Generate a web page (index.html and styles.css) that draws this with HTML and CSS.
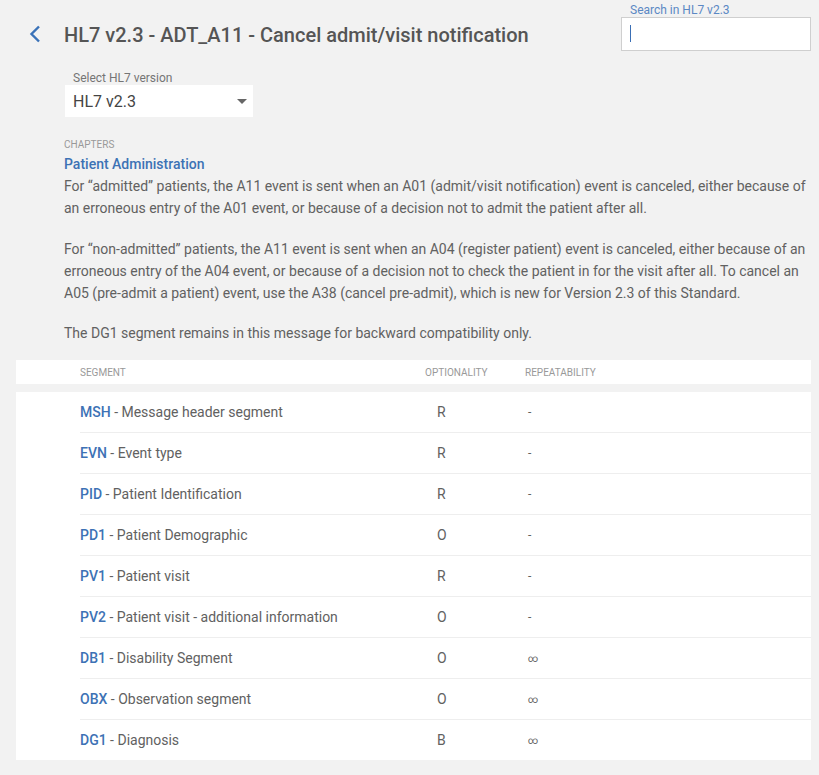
FILE: index.html
```html
<!DOCTYPE html>
<html lang="en">
<head>
<meta charset="utf-8">
<title>HL7 v2.3 - ADT_A11</title>
<link rel="stylesheet" href="styles.css">
</head>
<body>
<header class="header">
  <a class="back" href="#" aria-label="Back">
    <svg width="14" height="18" viewBox="0 0 14 18"><path d="M11 1.5 L3.5 9 L11 16.5" fill="none" stroke="#3a72b8" stroke-width="2.4"/></svg>
  </a>
  <h1 class="title">HL7 v2.3 - ADT_A11 - Cancel admit/visit notification</h1>
  <div class="search">
    <label class="search-label">Search in HL7 v2.3</label>
    <div class="search-input"><span class="caret"></span></div>
  </div>
</header>

<section class="version">
  <div class="version-label">Select HL7 version</div>
  <div class="select">
    <span>HL7 v2.3</span>
    <span class="arrow"></span>
  </div>
</section>

<section class="chapter">
  <div class="chapters-label">CHAPTERS</div>
  <div class="chapter-name">Patient Administration</div>
  <p>For “admitted” patients, the A11 event is sent when an A01 (admit/visit notification) event is canceled, either because of an erroneous entry of the A01 event, or because of a decision not to admit the patient after all.</p>
  <p>For “non-admitted” patients, the A11 event is sent when an A04 (register patient) event is canceled, either because of an erroneous entry of the A04 event, or because of a decision not to check the patient in for the visit after all. To cancel an A05 (pre-admit a patient) event, use the A38 (cancel pre-admit), which is new for Version 2.3 of this Standard.</p>
  <p>The DG1 segment remains in this message for backward compatibility only.</p>
</section>

<section class="table">
  <div class="thead">
    <div class="c-seg">SEGMENT</div>
    <div class="c-opt">OPTIONALITY</div>
    <div class="c-rep">REPEATABILITY</div>
  </div>
  <div class="tbody">
    <div class="row"><div class="c-seg"><b>MSH</b> - Message header segment</div><div class="c-opt v">R</div><div class="c-rep v">-</div></div>
    <div class="row"><div class="c-seg"><b>EVN</b> - Event type</div><div class="c-opt v">R</div><div class="c-rep v">-</div></div>
    <div class="row"><div class="c-seg"><b>PID</b> - Patient Identification</div><div class="c-opt v">R</div><div class="c-rep v">-</div></div>
    <div class="row"><div class="c-seg"><b>PD1</b> - Patient Demographic</div><div class="c-opt v">O</div><div class="c-rep v">-</div></div>
    <div class="row"><div class="c-seg"><b>PV1</b> - Patient visit</div><div class="c-opt v">R</div><div class="c-rep v">-</div></div>
    <div class="row"><div class="c-seg"><b>PV2</b> - Patient visit - additional information</div><div class="c-opt v">O</div><div class="c-rep v">-</div></div>
    <div class="row"><div class="c-seg"><b>DB1</b> - Disability Segment</div><div class="c-opt v">O</div><div class="c-rep v inf">∞</div></div>
    <div class="row"><div class="c-seg"><b>OBX</b> - Observation segment</div><div class="c-opt v">O</div><div class="c-rep v inf">∞</div></div>
    <div class="row"><div class="c-seg"><b>DG1</b> - Diagnosis</div><div class="c-opt v">B</div><div class="c-rep v inf">∞</div></div>
  </div>
</section>
</body>
</html>
```

FILE: styles.css
```css
* { box-sizing: border-box; }
html, body { margin: 0; padding: 0; }
body {
  background: #f2f2f2;
  font-family: Roboto, "Liberation Sans", Arial, sans-serif;
  color: #616161;
  width: 819px;
}

.header {
  display: flex;
  align-items: flex-start;
  padding: 0 8px 0 28px;
}
.back {
  display: block;
  width: 14px;
  height: 18px;
  margin-top: 25px;
}
.back svg { display: block; }
.title {
  margin: 23px 0 0 22px;
  font-size: 20px;
  line-height: 24px;
  font-weight: 500;
  color: #555;
}
.search {
  margin-left: auto;
  width: 190px;
}
.search-label {
  display: block;
  padding: 4px 0 0 9px;
  font-size: 12px;
  line-height: 13px;
  color: #5b88c4;
}
.search-input {
  height: 34px;
  background: #fff;
  border: 1px solid #cfcfcf;
  padding: 7px 0 0 8px;
}
.caret {
  display: block;
  width: 1px;
  height: 17px;
  background: #3a6fb5;
}

.version {
  padding: 20px 0 0 65px;
}
.version-label {
  padding-left: 8px;
  font-size: 12px;
  line-height: 14px;
  color: #757575;
}
.select {
  width: 188px;
  height: 32px;
  background: #fff;
  display: flex;
  align-items: center;
  justify-content: space-between;
  padding: 0 5px 0 8px;
  font-size: 16px;
  color: #444;
}
.arrow {
  width: 0;
  height: 0;
  border-left: 5px solid transparent;
  border-right: 5px solid transparent;
  border-top: 5px solid #666;
  margin-right: 1px;
}

.chapter {
  padding: 21px 8px 0 64px;
}
.chapters-label {
  font-size: 10px;
  line-height: 14px;
  color: #999;
}
.chapter-name {
  margin: 3px 0 2px;
  font-size: 14px;
  line-height: 18px;
  font-weight: 500;
  color: #3d72b5;
}
.chapter p {
  margin: 0 0 19px;
  font-size: 14px;
  line-height: 22px;
  color: #616161;
}
.chapter p:nth-of-type(2) { margin-bottom: 18px; }
.chapter p:last-child { margin-bottom: 16px; }

.table {
  margin: 0 8px 0 16px;
}
.thead {
  display: flex;
  align-items: center;
  height: 24px;
  background: #fff;
  padding-left: 64px;
  font-size: 10px;
  color: #999;
}
.tbody {
  margin-top: 8px;
  background: #fff;
  padding-left: 64px;
}
.row {
  display: flex;
  align-items: center;
  height: 41px;
  border-bottom: 1px solid #eee;
  font-size: 14px;
  color: #616161;
}
.row:last-child { height: 40px; border-bottom: none; }
.c-seg { width: 345px; }
.c-opt { width: 100px; }
.c-rep { flex: 1; }
.row b { font-weight: 500; color: #3d72b5; }
.c-opt.v { padding-left: 12px; }
.c-rep.v { padding-left: 3px; font-size: 12px; }
.c-rep.inf { font-size: 10px; }
```
